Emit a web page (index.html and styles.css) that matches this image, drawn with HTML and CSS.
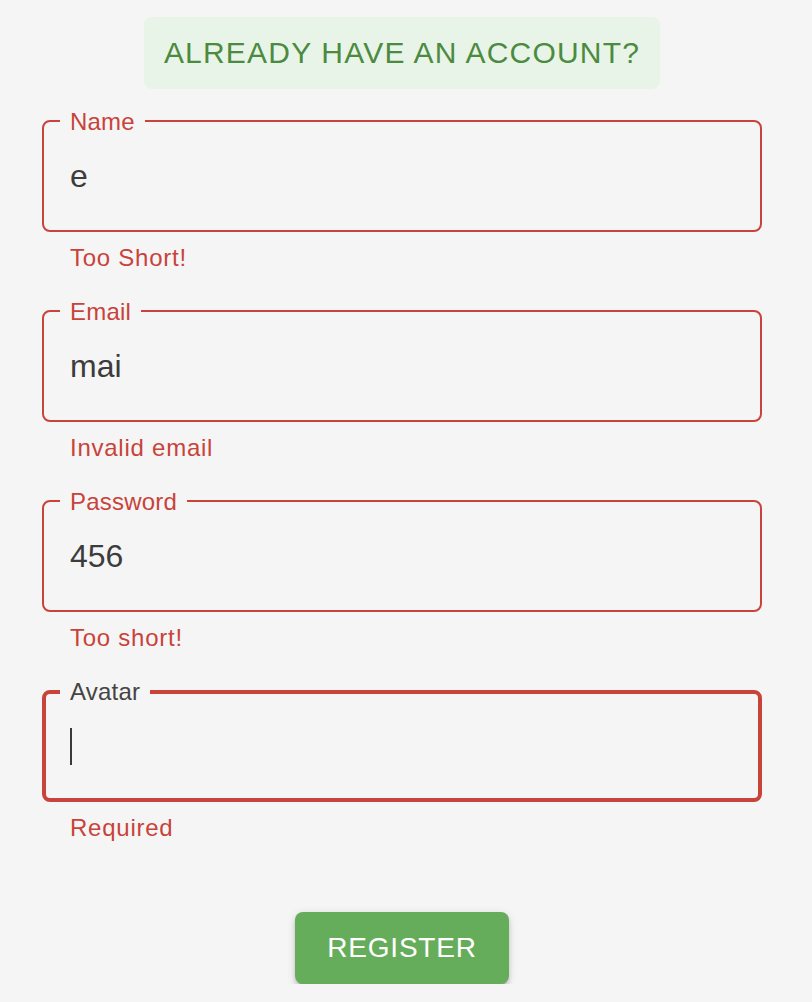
FILE: index.html
```html
<!DOCTYPE html>
<html lang="en">
<head>
<meta charset="utf-8">
<title>Register</title>
<link rel="stylesheet" href="styles.css">
</head>
<body>
<main class="page">
  <div class="top-row">
    <button class="login-btn" type="button">ALREADY HAVE AN ACCOUNT?</button>
  </div>
  <form class="form">
    <div class="group">
      <div class="field">
        <span class="label">Name</span>
        <div class="value">e</div>
      </div>
      <div class="helper">Too Short!</div>
    </div>
    <div class="group">
      <div class="field">
        <span class="label">Email</span>
        <div class="value">mai</div>
      </div>
      <div class="helper">Invalid email</div>
    </div>
    <div class="group">
      <div class="field">
        <span class="label">Password</span>
        <div class="value">456</div>
      </div>
      <div class="helper">Too short!</div>
    </div>
    <div class="group">
      <div class="field focused">
        <span class="label">Avatar</span>
        <div class="value"><span class="caret"></span></div>
      </div>
      <div class="helper">Required</div>
    </div>
  </form>
  <div class="submit-row">
    <button class="register-btn" type="button">REGISTER</button>
  </div>
</main>
</body>
</html>
```
FILE: styles.css
```css
html, body {
  margin: 0;
  padding: 0;
  background: #f5f5f5;
}

body {
  font-family: "Liberation Sans", Arial, Helvetica, sans-serif;
  color: #3c3c3c;
}

.page {
  width: 720px;
  margin-left: 42px;
  padding-top: 17px;
}

.top-row {
  display: flex;
  justify-content: center;
}

.login-btn {
  display: flex;
  align-items: center;
  justify-content: center;
  height: 72px;
  padding: 0 20px;
  border: none;
  border-radius: 8px;
  background: #e9f4e8;
  color: #4b8b3f;
  font-family: inherit;
  font-size: 30px;
  letter-spacing: 1.2px;
}

.form {
  display: flex;
  flex-direction: column;
  gap: 32px;
  margin-top: 31px;
}

.field {
  position: relative;
  box-sizing: border-box;
  height: 112px;
  border: 2px solid #c8433a;
  border-radius: 8px;
  display: flex;
  align-items: center;
  padding-left: 26px;
}

.field.focused {
  border-width: 4px;
  padding-left: 24px;
}

.label {
  position: absolute;
  top: -12px;
  left: 16px;
  padding: 0 10px;
  background: #f5f5f5;
  color: #c8433a;
  font-size: 24px;
  line-height: 24px;
  letter-spacing: 0.2px;
}

.field.focused .label {
  top: -14px;
  left: 14px;
  color: #444444;
}

.value {
  font-size: 32px;
  line-height: 46px;
  color: #3c3c3c;
  display: flex;
  align-items: center;
  height: 46px;
}

.caret {
  display: block;
  width: 2px;
  height: 37px;
  background: #3a3a3a;
}

.helper {
  margin-top: 6px;
  padding-left: 28px;
  font-size: 24px;
  line-height: 40px;
  color: #c8433a;
  letter-spacing: 0.75px;
}

.submit-row {
  display: flex;
  justify-content: center;
  margin-top: 64px;
}

.register-btn {
  display: flex;
  align-items: center;
  justify-content: center;
  height: 72px;
  padding: 0 32px;
  border: none;
  border-radius: 8px;
  background: #66ad5b;
  color: #ffffff;
  font-family: inherit;
  font-size: 28px;
  letter-spacing: 0.8px;
  box-shadow: 0 6px 2px -4px rgba(0,0,0,0.2), 0 4px 4px 0 rgba(0,0,0,0.14), 0 2px 10px 0 rgba(0,0,0,0.12);
}
```
